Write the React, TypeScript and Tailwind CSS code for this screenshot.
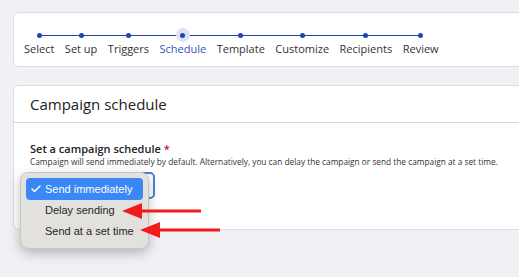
import { Check } from "lucide-react";

const steps = ["Select", "Set up", "Triggers", "Schedule", "Template", "Customize", "Recipients", "Review"];

const Stepper = () => (
  <div className="relative inline-flex gap-[10.5px] ml-2.5 mt-[18px]">
    <div className="absolute left-[14px] right-[17px] top-[3.5px] h-[1.5px] bg-[#1d44b8]" />
    {steps.map((s) => {
      const active = s === "Schedule";
      return (
        <div key={s} className="relative flex flex-col items-center">
          <div className="relative h-[8px] w-[8px] flex items-center justify-center">
            {active && <div className="absolute h-[14px] w-[14px] rounded-full bg-[#dce3f3]" />}
            <div className="relative h-[5px] w-[5px] rounded-full bg-[#1d44b8]" />
          </div>
          <span className={`mt-[3px] text-[11px] leading-[14px] ${active ? "text-[#2f55bb]" : "text-[#333]"}`}>{s}</span>
        </div>
      );
    })}
  </div>
);

const Arrows = () => (
  <svg className="absolute left-0 top-0 pointer-events-none" width="519" height="277">
    <rect x="138" y="209.5" width="63" height="3" fill="#f21b1b" />
    <polygon points="122,211 142,203 142,219" fill="#f21b1b" />
    <rect x="156" y="228.5" width="64" height="3" fill="#f21b1b" />
    <polygon points="140,230 160,222 160,238" fill="#f21b1b" />
  </svg>
);

export default function App() {
  return (
    <div
      className="relative h-[277px] w-[519px] overflow-hidden bg-[#f1f0f5]"
      style={{ fontFamily: '"Open Sans", sans-serif' }}
    >
      <div className="pl-[13px] pt-[12px]">
        <div className="h-[55px] w-[520px] rounded-l-[6px] border border-[#dcdce4] bg-white">
          <Stepper />
        </div>

        <div className="mt-[18px] h-[145px] w-[520px] rounded-l-[6px] border border-[#dcdce4] bg-white">
          <div className="flex h-[37px] items-center border-b border-[#d6d6de] pl-[16px]">
            <h2 className="text-[15px] text-[#222]">Campaign schedule</h2>
          </div>
          <div className="pl-[16px] pt-[19px]">
            <p className="text-[11px] leading-[14px] font-semibold text-[#222]">
              Set a campaign schedule <span className="text-[#c8102e]">*</span>
            </p>
            <p className="text-[8.3px] leading-[12px] text-[#333] whitespace-nowrap">
              Campaign will send immediately by default. Alternatively, you can delay the campaign or send the campaign at a set time.
            </p>
          </div>
          <div className="ml-[16px] mt-[4px] h-[27px] w-[125px] rounded-[5px] border-2 border-[#4a7fe0] bg-white" />
        </div>
      </div>

      <div
        className="absolute left-[20px] top-[172px] flex h-[77px] w-[129px] flex-col rounded-[8px] border border-[#c8c6c3] bg-[#e3e1de] px-[5px] py-[5px] shadow-[0_4px_12px_rgba(0,0,0,0.25)]"
        style={{ fontFamily: '"Liberation Sans", Arial, sans-serif' }}
      >
        <div className="flex h-[22px] items-center rounded-[4px] bg-[#3a87f6] text-white">
          <Check size={12} strokeWidth={3} className="ml-[4px] mr-[3px]" />
          <span className="text-[11px]">Send immediately</span>
        </div>
        <div className="flex h-[21px] items-center pl-[19px] text-[11px] text-[#262626]">Delay sending</div>
        <div className="flex h-[21px] items-center pl-[19px] text-[11px] text-[#262626]">Send at a set time</div>
      </div>

      <Arrows />
    </div>
  );
}
